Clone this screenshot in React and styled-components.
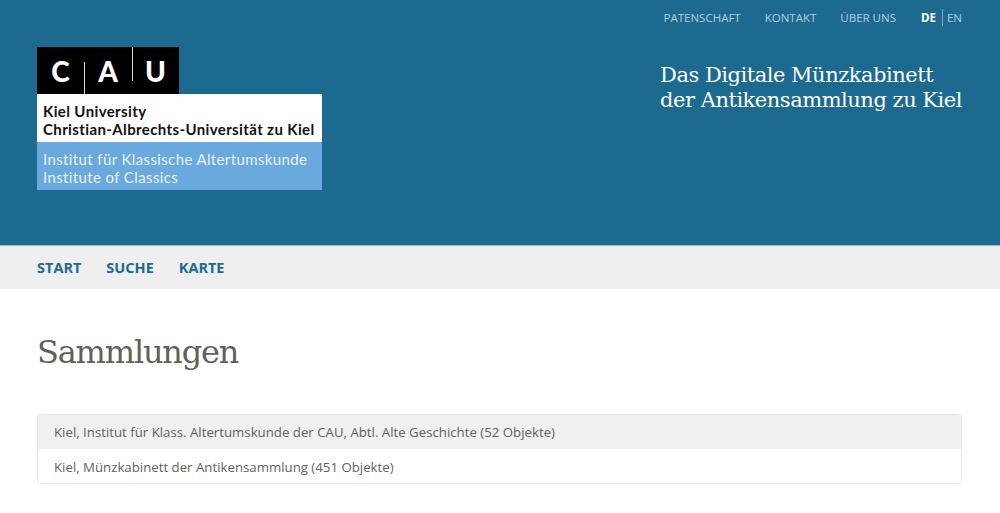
import React from 'react';
import styled, { createGlobalStyle } from 'styled-components';

const GlobalStyle = createGlobalStyle`
  html, body {
    margin: 0;
    background: #fff;
    font-family: 'Open Sans', sans-serif;
    color: #655f59;
  }
`;

const Page = styled.div`
  width: 1000px;
  height: 513px;
  overflow: hidden;
`;

const Header = styled.header`
  height: 246px;
  box-sizing: border-box;
  padding: 0 38px 0 37px;
  background: #1d6a90;
  border-bottom: 1px solid #9dbccb;
  display: flex;
  flex-direction: column;
`;

const MetaNav = styled.nav`
  height: 47px;
  display: flex;
  justify-content: flex-end;
  align-items: flex-start;
  padding-top: 9px;
  box-sizing: border-box;
  font-size: 11.5px;
  line-height: 17px;
`;

const MetaLink = styled.a`
  color: #b5cfdc;
  margin-left: 24px;
`;

const Lang = styled.span`
  margin-left: 25px;
  display: flex;
  color: #b5cfdc;
`;

const LangActive = styled.b`
  color: #fff;
  font-weight: 700;
  padding-right: 6px;
  border-right: 1px solid #7ea9bf;
  margin-right: 4px;
`;

const HeaderRow = styled.div`
  display: flex;
  justify-content: space-between;
  align-items: flex-start;
`;

const Logo = styled.div`
  width: 285px;
  display: flex;
  flex-direction: column;
`;

const LogoBlack = styled.div`
  width: 142px;
  height: 47px;
  background: #000;
  display: grid;
  grid-template-columns: 47px 48px 47px;
`;

const LogoLetter = styled.span`
  position: relative;
  display: flex;
  align-items: center;
  justify-content: center;
  color: #fff;
  font-family: 'Lato', sans-serif;
  font-weight: 900;
  font-size: 28px;
  padding-top: 1px;

  &::before {
    content: '';
    display: ${p => (p.$rule ? 'block' : 'none')};
    position: absolute;
    left: 0;
    width: 1px;
    background: #ddd;
    ${p => (p.$rule === 'low' ? 'bottom: 0; height: 32px;' : 'top: 0; height: 34px;')}
  }
`;

const LogoBlock = styled.div`
  height: 48px;
  box-sizing: border-box;
  padding: 8px 0 0 6px;
  background: ${p => p.$bg};
  color: ${p => p.$fg};
  font-family: 'Lato', sans-serif;
  font-weight: ${p => p.$weight};
  font-size: 15px;
  letter-spacing: 0.38px;
  line-height: 18px;
  white-space: nowrap;
`;

const Tagline = styled.h2`
  margin: 16px 0 0;
  font-family: 'DejaVu Serif', serif;
  font-weight: 400;
  font-size: 21px;
  letter-spacing: -0.48px;
  line-height: 25px;
  color: #fff;
`;

const MainNav = styled.nav`
  height: 43px;
  box-sizing: border-box;
  padding: 0 37px 1px;
  background: #efefef;
  display: flex;
  align-items: center;
  gap: 25px;
`;

const NavLink = styled.a`
  color: #1d6a90;
  font-weight: 700;
  font-size: 14.5px;
`;

const Main = styled.main`
  padding: 40px 38px 0 37px;
`;

const Title = styled.h1`
  margin: 0 0 39px;
  font-family: 'DejaVu Serif', serif;
  font-weight: 400;
  font-size: 32px;
  letter-spacing: -1.2px;
  line-height: 46px;
  color: #655f59;
`;

const List = styled.ul`
  margin: 0;
  padding: 0;
  list-style: none;
  border: 1px solid #e6e6e6;
  border-radius: 4px;
  overflow: hidden;
`;

const Item = styled.li`
  height: 34px;
  box-sizing: border-box;
  display: flex;
  align-items: center;
  padding: ${p => (p.$active ? '0 16px' : '1px 16px 0')};
  font-size: 13.24px;
  background: ${p => (p.$active ? '#f0f0f0' : '#fff')};
`;

const App = () => {
  return (
    <>
      <GlobalStyle />
      <Page>
        <Header>
          <MetaNav>
            <MetaLink>PATENSCHAFT</MetaLink>
            <MetaLink>KONTAKT</MetaLink>
            <MetaLink>ÜBER UNS</MetaLink>
            <Lang>
              <LangActive>DE</LangActive>EN
            </Lang>
          </MetaNav>
          <HeaderRow>
            <Logo>
              <LogoBlack>
                <LogoLetter>C</LogoLetter>
                <LogoLetter $rule="low">A</LogoLetter>
                <LogoLetter $rule="high">U</LogoLetter>
              </LogoBlack>
              <LogoBlock $bg="#fff" $fg="#111" $weight={700}>
                Kiel University
                <br />
                Christian-Albrechts-Universität zu Kiel
              </LogoBlock>
              <LogoBlock $bg="#69a9dd" $fg="#eaf3fb" $weight={400}>
                Institut für Klassische Altertumskunde
                <br />
                Institute of Classics
              </LogoBlock>
            </Logo>
            <Tagline>
              Das Digitale Münzkabinett
              <br />
              der Antikensammlung zu Kiel
            </Tagline>
          </HeaderRow>
        </Header>
        <MainNav>
          <NavLink>START</NavLink>
          <NavLink>SUCHE</NavLink>
          <NavLink>KARTE</NavLink>
        </MainNav>
        <Main>
          <Title>Sammlungen</Title>
          <List>
            <Item $active>Kiel, Institut für Klass. Altertumskunde der CAU, Abtl. Alte Geschichte (52 Objekte)</Item>
            <Item>Kiel, Münzkabinett der Antikensammlung (451 Objekte)</Item>
          </List>
        </Main>
      </Page>
    </>
  );
};

export default App;
